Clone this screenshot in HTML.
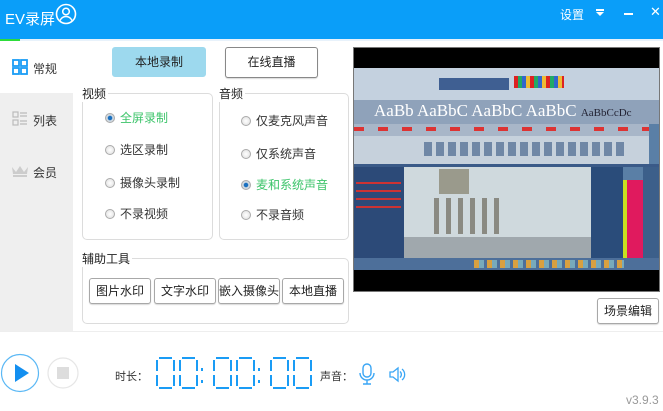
<!DOCTYPE html>
<html><head><meta charset="utf-8"><style>
*{margin:0;padding:0;box-sizing:border-box}
body{width:663px;height:411px;overflow:hidden;background:#fff;font-family:"Liberation Sans","Noto Sans CJK SC",sans-serif;font-size:12px;color:#333;position:relative}
.a{position:absolute}
.btn{position:absolute;border:1px solid #a8a8a8;border-radius:3px;background:#fff;text-align:center;font-size:12px;color:#222;box-shadow:0 1px 1px rgba(0,0,0,.15)}
.grp{position:absolute;border:1px solid #dcdcdc;border-radius:5px}
.gt{position:absolute;background:#fff;font-size:12px;color:#222;padding-right:2px}
.rd{position:absolute;font-size:12px;color:#333}
.rd i{display:inline-block;width:10px;height:10px;border-radius:50%;border:1px solid #aaa;background:radial-gradient(#fff,#ddd);vertical-align:-1px;margin-right:5px}
.rd.on{color:#3cc46a}
.rd.on i{background:radial-gradient(#1a70c0 35%,#cfd8e0 45%)}
</style></head><body>
<div class="a" style="left:0;top:0;width:663px;height:39px;background:#0a9ef9"></div>
<div class="a" style="left:5px;top:8px;color:#fff;font-size:15px">EV录屏</div>
<svg class="a" style="left:55px;top:3px" width="22" height="22" viewBox="0 0 22 22"><circle cx="11" cy="11" r="9.5" fill="none" stroke="#fff" stroke-width="1.6"/><circle cx="11" cy="8.5" r="3.3" fill="none" stroke="#fff" stroke-width="1.5"/><path d="M5 17.5c1.5-3 3.5-4 6-4s4.5 1 6 4" fill="none" stroke="#fff" stroke-width="1.5"/></svg>
<div class="a" style="left:560px;top:6px;color:#fff;font-size:12px">设置</div>
<svg class="a" style="left:595px;top:8px" width="10" height="9"><rect x="1" y="1" width="8" height="2" fill="#fff"/><path d="M1 4h8l-4 4z" fill="#fff"/></svg>
<div class="a" style="left:624px;top:13px;width:9px;height:2px;background:#fff"></div>
<div class="a" style="left:650px;top:4px;color:#fff;font-size:13px">✕</div>
<div class="a" style="left:0;top:39px;width:20px;height:2px;background:#2ddc3a"></div>
<div class="a" style="left:20px;top:39px;width:643px;height:2px;background:#e8f2fb"></div>
<!-- sidebar -->
<div class="a" style="left:0;top:93px;width:73px;height:239px;background:#efefef"></div>
<svg class="a" style="left:12px;top:59px" width="16" height="16"><g fill="none" stroke="#1a9cf5" stroke-width="1.8"><rect x="1" y="1" width="6" height="6"/><rect x="9" y="1" width="6" height="6"/><rect x="1" y="9" width="6" height="6"/><rect x="9" y="9" width="6" height="6"/></g></svg>
<div class="a" style="left:33px;top:60px;font-size:12px;color:#333">常规</div>
<svg class="a" style="left:12px;top:111px" width="16" height="16"><g fill="none" stroke="#bbb" stroke-width="1.2"><rect x="1" y="1" width="5" height="5"/><rect x="1" y="9" width="5" height="5"/></g><g stroke="#bbb" stroke-width="1.2"><path d="M8 2h7M8 5h7M8 10h7M8 13h7"/></g></svg>
<div class="a" style="left:33px;top:112px">列表</div>
<svg class="a" style="left:11px;top:165px" width="18" height="12"><path d="M1 2l4 5 4-6 4 6 4-5-1 7H2z" fill="#ccc"/><rect x="2" y="10" width="14" height="2" fill="#ccc"/></svg>
<div class="a" style="left:33px;top:164px">会员</div>
<!-- top buttons -->
<div class="btn" style="left:112px;top:47px;width:94px;height:30px;line-height:28px;background:#9dd9ee;border-color:#9dd9ee;box-shadow:none">本地录制</div>
<div class="btn" style="left:225px;top:47px;width:93px;height:31px;line-height:29px;border-color:#888">在线直播</div>
<!-- groups -->
<div class="grp" style="left:82px;top:93px;width:131px;height:147px"></div>
<div class="gt" style="left:82px;top:85px">视频</div>
<div class="rd on" style="left:105px;top:109px"><i></i>全屏录制</div>
<div class="rd" style="left:105px;top:141px"><i></i>选区录制</div>
<div class="rd" style="left:105px;top:174px"><i></i>摄像头录制</div>
<div class="rd" style="left:105px;top:205px"><i></i>不录视频</div>
<div class="grp" style="left:219px;top:93px;width:130px;height:147px"></div>
<div class="gt" style="left:219px;top:85px">音频</div>
<div class="rd" style="left:241px;top:112px"><i></i>仅麦克风声音</div>
<div class="rd" style="left:241px;top:145px"><i></i>仅系统声音</div>
<div class="rd on" style="left:241px;top:176px"><i></i>麦和系统声音</div>
<div class="rd" style="left:241px;top:206px"><i></i>不录音频</div>
<div class="grp" style="left:82px;top:258px;width:267px;height:66px"></div>
<div class="gt" style="left:82px;top:250px">辅助工具</div>
<div class="btn" style="left:89px;top:278px;width:62px;height:26px;line-height:24px">图片水印</div>
<div class="btn" style="left:154px;top:278px;width:62px;height:26px;line-height:24px">文字水印</div>
<div class="btn" style="left:218px;top:278px;width:62px;height:26px;line-height:24px">嵌入摄像头</div>
<div class="btn" style="left:282px;top:278px;width:62px;height:26px;line-height:24px">本地直播</div>
<!-- preview -->
<div class="a" style="left:353px;top:47px;width:307px;height:245px;background:#000;border:1px solid #777;overflow:hidden">
 <div class="a" style="left:0;top:20px;width:307px;height:202px;background:#5a7fa6"></div>
 <div class="a" style="left:0;top:20px;width:307px;height:32px;background:#c4d1df"></div>
 <div class="a" style="left:85px;top:30px;width:70px;height:12px;background:#3f5f92"></div>
 <div class="a" style="left:160px;top:28px;width:50px;height:12px;background:repeating-linear-gradient(90deg,#d22 0 4px,#2a6 4px 8px,#36c 8px 12px,#eb3 12px 16px)"></div>
 <div class="a" style="left:0;top:52px;width:307px;height:24px;background:#8fa2ba"></div>
 <div class="a" style="left:20px;top:53px;color:#fff;font-size:17px;font-family:'Liberation Serif',serif;white-space:nowrap">AaBb AaBbC AaBbC AaBbC <span style="font-size:11px;color:#223">AaBbCcDc</span></div>
 <div class="a" style="left:0;top:76px;width:295px;height:12px;background:#a8b6c8"></div>
 <div class="a" style="left:0;top:79px;width:295px;height:4px;background:repeating-linear-gradient(90deg,#d33 0 10px,#a8b6c8 10px 24px)"></div>
 <div class="a" style="left:0;top:88px;width:295px;height:28px;background:#c6d1dc"></div>
 <div class="a" style="left:70px;top:94px;width:200px;height:14px;background:repeating-linear-gradient(90deg,#6f87a6 0 8px,#c6d1dc 8px 12px)"></div>
 <div class="a" style="left:0;top:116px;width:307px;height:3px;background:#3a5a88"></div>
 <div class="a" style="left:0;top:119px;width:50px;height:91px;background:#2c4a78"></div>
 <div class="a" style="left:2px;top:130px;width:45px;height:30px;background:repeating-linear-gradient(0deg,#c33 0 2px,#2c4a78 2px 8px)"></div>
 <div class="a" style="left:50px;top:119px;width:187px;height:70px;background:#cfd9dd"></div>
 <div class="a" style="left:85px;top:121px;width:30px;height:25px;background:#9a9a8c"></div>
 <div class="a" style="left:80px;top:150px;width:70px;height:36px;background:repeating-linear-gradient(90deg,#8a8a82 0 5px,#cfd9dd 5px 12px)"></div>
 <div class="a" style="left:50px;top:189px;width:187px;height:21px;background:#a0a8ad"></div>
 <div class="a" style="left:237px;top:119px;width:32px;height:91px;background:#2a4c7a"></div>
 <div class="a" style="left:269px;top:132px;width:20px;height:78px;background:#e01a5e"></div>
 <div class="a" style="left:269px;top:132px;width:4px;height:78px;background:#c8e020"></div>
 <div class="a" style="left:289px;top:119px;width:18px;height:91px;background:#3c5f8a"></div>
 <div class="a" style="left:0;top:210px;width:307px;height:12px;background:#4d6f9a"></div>
 <div class="a" style="left:120px;top:212px;width:150px;height:8px;background:repeating-linear-gradient(90deg,#d8a040 0 5px,#7ab 5px 10px,#4d6f9a 10px 13px)"></div>
</div>
<div class="btn" style="left:597px;top:298px;width:62px;height:26px;line-height:24px">场景编辑</div>
<!-- bottom -->
<div class="a" style="left:0;top:331px;width:663px;height:1px;background:#eee"></div>
<svg class="a" style="left:0;top:352px" width="90" height="44"><circle cx="20" cy="21" r="18.5" fill="#fff" stroke="#5bb8f5" stroke-width="1.2"/><path d="M15 12v18l14-9z" fill="#138ff0"/><circle cx="63" cy="21" r="15" fill="#fff" stroke="#e6e6e6" stroke-width="1.2"/><rect x="57" y="15" width="12" height="12" fill="#ddd"/></svg>
<div class="a" style="left:115px;top:368px;font-size:11px">时长：</div>
<svg class="a" style="left:150px;top:356px" width="170" height="36"><defs><g id="d" fill="none" stroke="#1a9cf5" stroke-width="2"><path d="M4 2h13M4 32h13M2 4v11M2 19v11M19 4v11M19 19v11"/></g></defs>
<use href="#d" x="5"/><use href="#d" x="28"/><use href="#d" x="62"/><use href="#d" x="85"/><use href="#d" x="119"/><use href="#d" x="142"/>
<g fill="#1a9cf5"><rect x="51" y="12" width="2" height="3"/><rect x="51" y="24" width="2" height="3"/><rect x="108" y="12" width="2" height="3"/><rect x="108" y="24" width="2" height="3"/></g></svg>
<div class="a" style="left:320px;top:368px;font-size:11px">声音：</div>
<svg class="a" style="left:358px;top:363px" width="18" height="23"><rect x="5" y="1" width="8" height="13" rx="4" fill="none" stroke="#3aa6f5" stroke-width="1.4"/><path d="M2 10a7 7 0 0 0 14 0M9 17v4M5 21h8" fill="none" stroke="#3aa6f5" stroke-width="1.4"/></svg>
<svg class="a" style="left:388px;top:366px" width="18" height="17"><path d="M2 6h3l5-4v13l-5-4H2z" fill="none" stroke="#3aa6f5" stroke-width="1.3"/><path d="M12 5.5a4 4 0 0 1 0 6M14 3a7 7 0 0 1 0 11" fill="none" stroke="#3aa6f5" stroke-width="1.3"/></svg>
<div class="a" style="left:626px;top:393px;font-size:12px;color:#999">v3.9.3</div>
</body></html>
